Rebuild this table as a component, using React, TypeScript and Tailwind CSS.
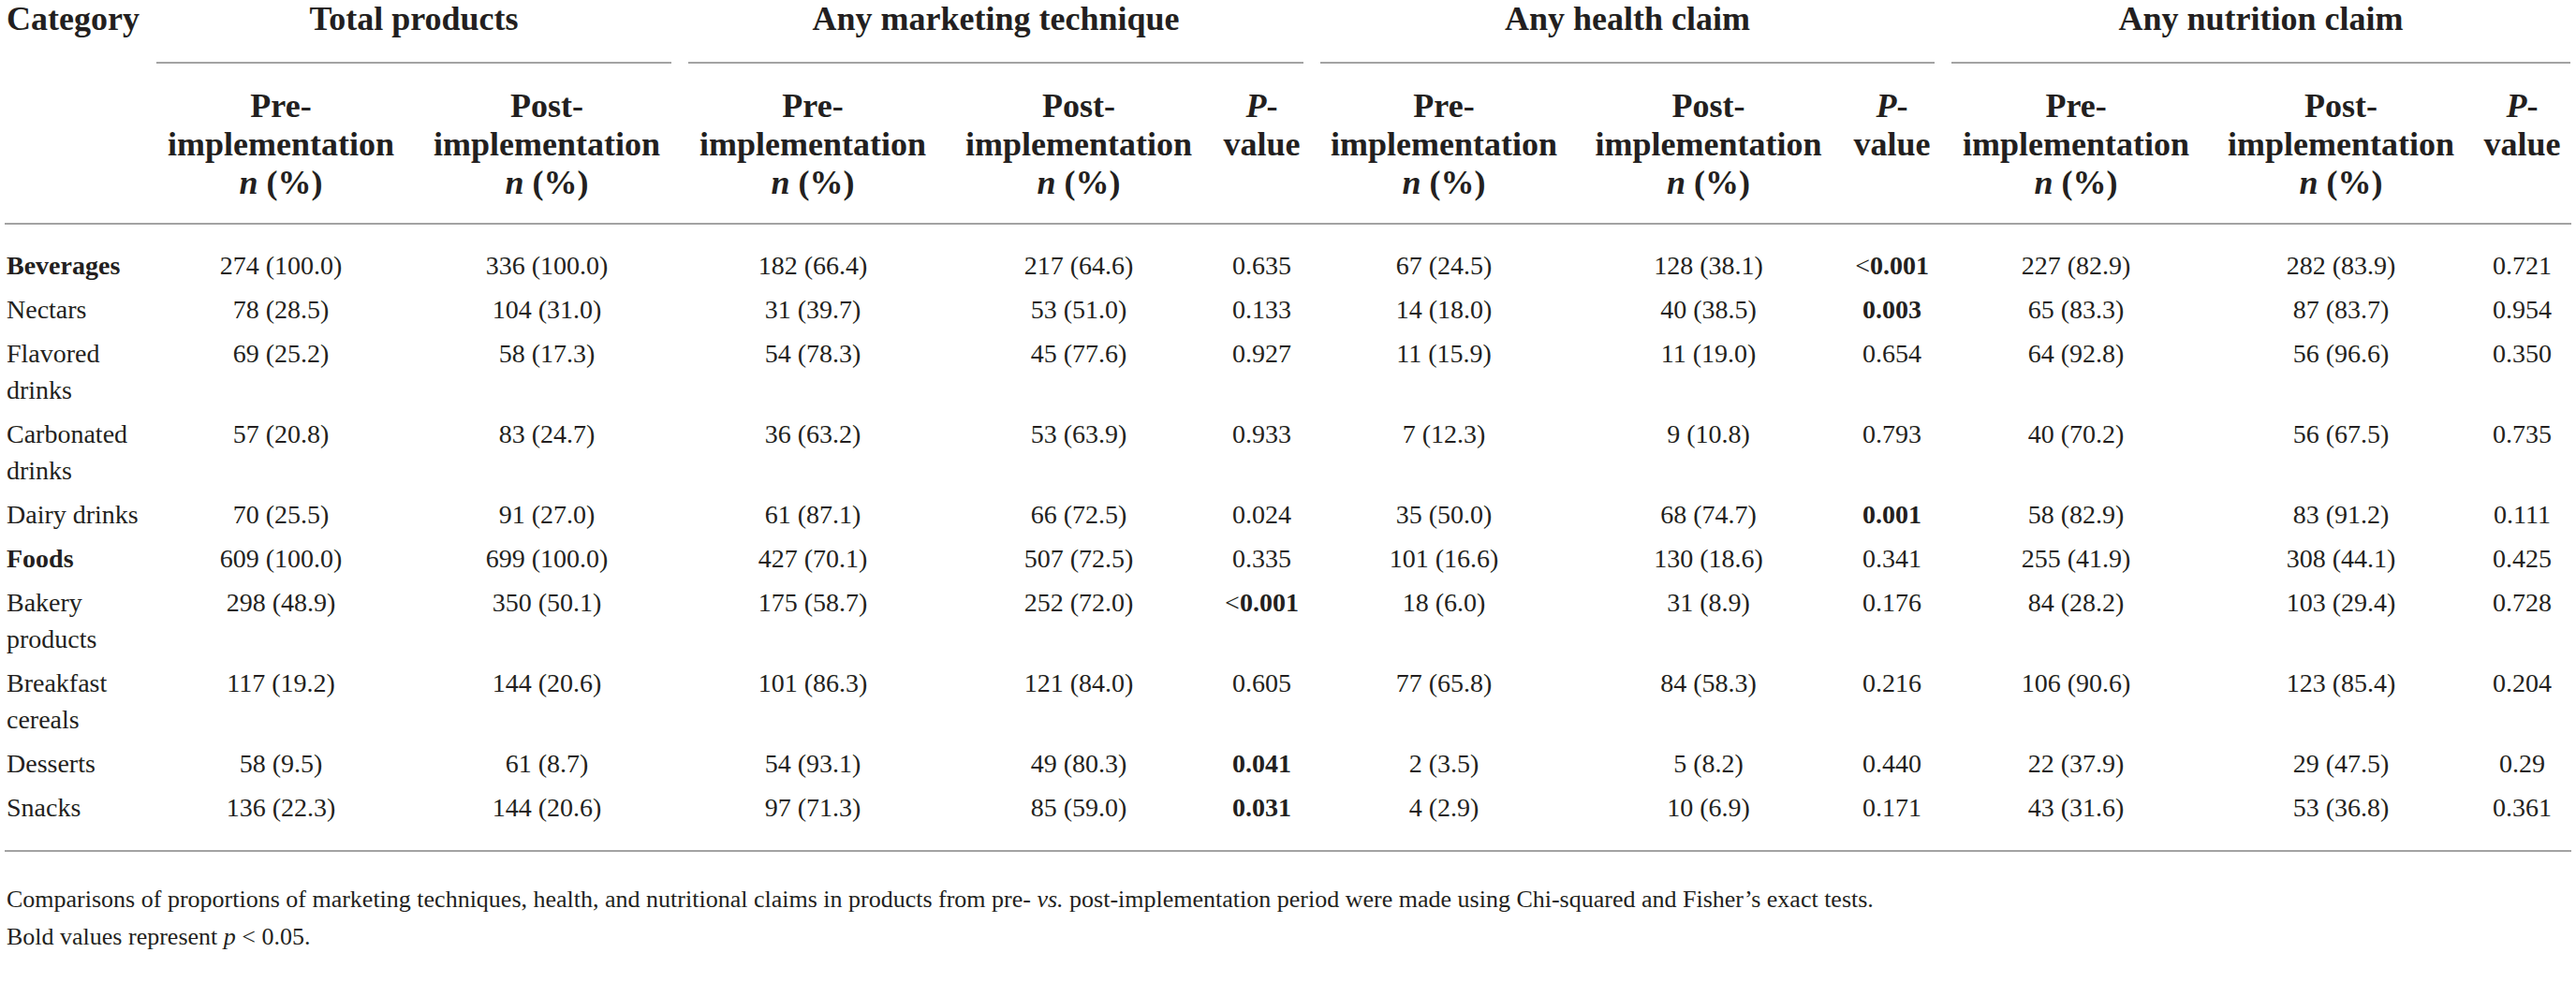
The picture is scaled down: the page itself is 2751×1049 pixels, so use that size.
const rows = [
  { name: ["Beverages"], bold: true, v: ["274 (100.0)", "336 (100.0)", "182 (66.4)", "217 (64.6)", "0.635", "67 (24.5)", "128 (38.1)", "<!0.001", "227 (82.9)", "282 (83.9)", "0.721"] },
  { name: ["Nectars"], v: ["78 (28.5)", "104 (31.0)", "31 (39.7)", "53 (51.0)", "0.133", "14 (18.0)", "40 (38.5)", "!0.003", "65 (83.3)", "87 (83.7)", "0.954"] },
  { name: ["Flavored", "drinks"], v: ["69 (25.2)", "58 (17.3)", "54 (78.3)", "45 (77.6)", "0.927", "11 (15.9)", "11 (19.0)", "0.654", "64 (92.8)", "56 (96.6)", "0.350"] },
  { name: ["Carbonated", "drinks"], v: ["57 (20.8)", "83 (24.7)", "36 (63.2)", "53 (63.9)", "0.933", "7 (12.3)", "9 (10.8)", "0.793", "40 (70.2)", "56 (67.5)", "0.735"] },
  { name: ["Dairy drinks"], v: ["70 (25.5)", "91 (27.0)", "61 (87.1)", "66 (72.5)", "0.024", "35 (50.0)", "68 (74.7)", "!0.001", "58 (82.9)", "83 (91.2)", "0.111"] },
  { name: ["Foods"], bold: true, v: ["609 (100.0)", "699 (100.0)", "427 (70.1)", "507 (72.5)", "0.335", "101 (16.6)", "130 (18.6)", "0.341", "255 (41.9)", "308 (44.1)", "0.425"] },
  { name: ["Bakery", "products"], v: ["298 (48.9)", "350 (50.1)", "175 (58.7)", "252 (72.0)", "<!0.001", "18 (6.0)", "31 (8.9)", "0.176", "84 (28.2)", "103 (29.4)", "0.728"] },
  { name: ["Breakfast", "cereals"], v: ["117 (19.2)", "144 (20.6)", "101 (86.3)", "121 (84.0)", "0.605", "77 (65.8)", "84 (58.3)", "0.216", "106 (90.6)", "123 (85.4)", "0.204"] },
  { name: ["Desserts"], v: ["58 (9.5)", "61 (8.7)", "54 (93.1)", "49 (80.3)", "!0.041", "2 (3.5)", "5 (8.2)", "0.440", "22 (37.9)", "29 (47.5)", "0.29"] },
  { name: ["Snacks"], v: ["136 (22.3)", "144 (20.6)", "97 (71.3)", "85 (59.0)", "!0.031", "4 (2.9)", "10 (6.9)", "0.171", "43 (31.6)", "53 (36.8)", "0.361"] },
];

const widths = ["w-[153px]", "w-[284px]", "w-[284px]", "w-[284px]", "w-[284px]", "w-[107px]", "w-[282px]", "w-[283px]", "w-[109px]", "w-[284px]", "w-[282px]", "w-[105px]"];

const Value = ({ text }: { text: string }) => {
  const i = text.indexOf("!");
  if (i < 0) return <>{text}</>;
  return (
    <>
      {text.slice(0, i)}
      <span className="font-bold">{text.slice(i + 1)}</span>
    </>
  );
};

const SubHead = ({ kind }: { kind: "pre" | "post" | "p" }) => {
  if (kind === "p")
    return (
      <th className="align-top text-center font-bold pt-[25px] pb-[22px] border-b-2 border-[#a3a3a3]">
        <div>
          <span className="italic">P</span>-
        </div>
        <div>value</div>
      </th>
    );
  return (
    <th className="align-top text-center font-bold pt-[25px] pb-[22px] border-b-2 border-[#a3a3a3]">
      <div>{kind === "pre" ? "Pre-" : "Post-"}</div>
      <div>implementation</div>
      <div>
        <span className="italic">n</span> (%)
      </div>
    </th>
  );
};

const GroupHead = ({ label, span, last }: { label: string; span: number; last?: boolean }) => (
  <th colSpan={span} className="align-top p-0 font-bold text-center">
    <div className={`pb-[25px] border-b-2 border-[#a3a3a3] ml-[9px] ${last ? "mr-[1px]" : "mr-[9px]"}`}>
      {label}
    </div>
  </th>
);

const App = () => {
  return (
    <div className="w-[2751px] h-[1049px] bg-white text-[#231f20] font-['Liberation_Serif',serif] pl-[5px] pr-[5px] overflow-hidden">
      <table className="w-[2741px] table-fixed border-collapse">
        <colgroup>
          {widths.map((w, i) => (
            <col key={i} className={w} />
          ))}
        </colgroup>
        <thead className="text-[36px] leading-[41px]">
          <tr>
            <th rowSpan={2} className="align-top text-left font-bold pl-[2px] border-b-2 border-[#a3a3a3]">
              Category
            </th>
            <GroupHead label="Total products" span={2} />
            <GroupHead label="Any marketing technique" span={3} />
            <GroupHead label="Any health claim" span={3} />
            <GroupHead label="Any nutrition claim" span={3} last />
          </tr>
          <tr>
            <SubHead kind="pre" />
            <SubHead kind="post" />
            <SubHead kind="pre" />
            <SubHead kind="post" />
            <SubHead kind="p" />
            <SubHead kind="pre" />
            <SubHead kind="post" />
            <SubHead kind="p" />
            <SubHead kind="pre" />
            <SubHead kind="post" />
            <SubHead kind="p" />
          </tr>
        </thead>
        <tbody className="text-[28px] leading-[39px]">
          {rows.map((r, ri) => {
            const pad = ri === 0 ? "pt-[24px] pb-[4px]" : ri === rows.length - 1 ? "pt-[4px] pb-[26px] border-b-2 border-[#a3a3a3]" : "py-[4px]";
            return (
              <tr key={ri}>
                <td className={`align-top text-left pl-[2px] ${pad} ${r.bold ? "font-bold" : ""}`}>
                  {r.name.map((n, k) => (
                    <div key={k} className="whitespace-nowrap">
                      {n}
                    </div>
                  ))}
                </td>
                {r.v.map((v, k) => (
                  <td key={k} className={`align-top text-center whitespace-nowrap ${pad}`}>
                    <Value text={v} />
                  </td>
                ))}
              </tr>
            );
          })}
        </tbody>
      </table>
      <div className="mt-[31px] pl-[2px] text-[26px] leading-[40px]">
        <p>
          Comparisons of proportions of marketing techniques, health, and nutritional claims in products from pre- <span className="italic">vs.</span> post-implementation period were made using Chi-squared and Fisher’s exact tests.
        </p>
        <p>
          Bold values represent <span className="italic">p</span> &lt; 0.05.
        </p>
      </div>
    </div>
  );
};

export default App;
